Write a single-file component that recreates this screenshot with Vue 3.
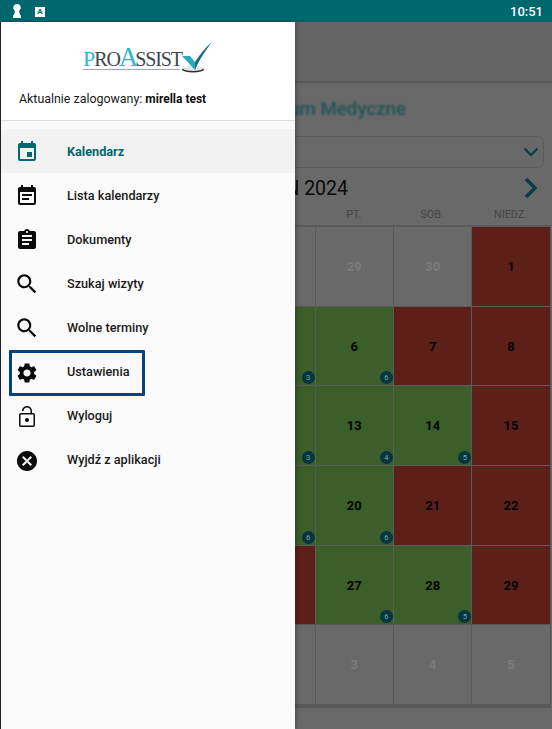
<script setup>
const icons = {
  event: 'M17 12h-5v5h5v-5zM16 1v2H8V1H6v2H5c-1.11 0-1.99.9-1.99 2L3 19c0 1.1.89 2 2 2h14c1.1 0 2-.9 2-2V5c0-1.1-.9-2-2-2h-1V1h-2zm3 18H5V8h14v11z',
  note: 'M21 5c0-1.1-.9-2-2-2h-1V1h-2v2H8V1H6v2H5c-1.11 0-1.99.9-1.99 2L3 19c0 1.1.89 2 2 2h14c1.1 0 2-.9 2-2V5zm-2 14H5V8h14v11zM7 10h10v2H7zm0 4h7v2H7z',
  doc: 'M19 3h-4.18C14.4 1.84 13.3 1 12 1c-1.3 0-2.4.84-2.82 2H5c-1.1 0-2 .9-2 2v14c0 1.1.9 2 2 2h14c1.1 0 2-.9 2-2V5c0-1.1-.9-2-2-2zm-7 0c.55 0 1 .45 1 1s-.45 1-1 1-1-.45-1-1 .45-1 1-1zm2 14H7v-2h7v2zm3-4H7v-2h10v2zm0-4H7V7h10v2z',
  search: 'M15.5 14h-.79l-.28-.27C15.41 12.59 16 11.11 16 9.5 16 5.91 13.09 3 9.5 3S3 5.91 3 9.5 5.91 16 9.5 16c1.61 0 3.09-.59 4.23-1.57l.27.28v.79l5 4.99L20.49 19l-4.99-5zm-6 0C7.01 14 5 11.99 5 9.5S7.01 5 9.5 5 14 7.01 14 9.5 11.99 14 9.5 14z',
  gear: 'M19.14 12.94c.04-.3.06-.61.06-.94 0-.32-.02-.64-.07-.94l2.03-1.58c.18-.14.23-.41.12-.61l-1.92-3.32c-.12-.22-.37-.29-.59-.22l-2.39.96c-.5-.38-1.03-.7-1.62-.94l-.36-2.54c-.04-.24-.24-.41-.48-.41h-3.84c-.24 0-.43.17-.47.41l-.36 2.54c-.59.24-1.13.57-1.62.94l-2.39-.96c-.22-.08-.47 0-.59.22L2.74 8.87c-.12.21-.08.47.12.61l2.03 1.58c-.05.3-.09.63-.09.94s.02.64.07.94l-2.03 1.58c-.18.14-.23.41-.12.61l1.92 3.32c.12.22.37.29.59.22l2.39-.96c.5.38 1.03.7 1.62.94l.36 2.54c.05.24.24.41.48.41h3.84c.24 0 .44-.17.47-.41l.36-2.54c.59-.24 1.13-.56 1.62-.94l2.39.96c.22.08.47 0 .59-.22l1.92-3.32c.12-.22.07-.47-.12-.61l-2.01-1.58zM12 15.6c-1.98 0-3.6-1.62-3.6-3.6s1.62-3.6 3.6-3.6 3.6 1.62 3.6 3.6-1.62 3.6-3.6 3.6z',
  lock: 'M12 17c1.1 0 2-.9 2-2s-.9-2-2-2-2 .9-2 2 .9 2 2 2zm6-9h-1V6c0-2.76-2.24-5-5-5S7 3.24 7 6h1.5c0-1.93 1.57-3.5 3.5-3.5s3.5 1.57 3.5 3.5v2H6c-1.1 0-2 .9-2 2v10c0 1.1.9 2 2 2h12c1.1 0 2-.9 2-2V10c0-1.1-.9-2-2-2zm.5 12c0 .28-.22.5-.5.5H6c-.28 0-.5-.22-.5-.5V10c0-.28.22-.5.5-.5h12c.28 0 .5.22.5.5v10z',
  cancel: 'M12 2C6.47 2 2 6.47 2 12s4.47 10 10 10 10-4.47 10-10S17.53 2 12 2zm5 13.59L15.59 17 12 13.41 8.41 17 7 15.59 10.59 12 7 8.41 8.41 7 12 10.59 15.59 7 17 8.41 13.41 12 17 15.59z'
}
const menu = [
  { label: 'Kalendarz', icon: 'event', active: true },
  { label: 'Lista kalendarzy', icon: 'note' },
  { label: 'Dokumenty', icon: 'doc' },
  { label: 'Szukaj wizyty', icon: 'search' },
  { label: 'Wolne terminy', icon: 'search' },
  { label: 'Ustawienia', icon: 'gear', focus: true },
  { label: 'Wyloguj', icon: 'lock' },
  { label: 'Wyjdź z aplikacji', icon: 'cancel' }
]
const weekdays = ['PON.', 'WT.', 'ŚR.', 'CZW.', 'PT.', 'SOB.', 'NIEDZ.']
const g = (n, b) => ({ n, t: 'green', b })
const r = n => ({ n, t: 'red' })
const o = n => ({ n, t: 'off' })
const cells = [
  o(25), o(26), o(27), o(28), o(29), o(30), r(1),
  g(2, 3), g(3, 3), g(4, 3), g(5, 3), g(6, 6), r(7), r(8),
  g(9, 3), g(10, 3), g(11, 3), g(12, 3), g(13, 4), g(14, 5), r(15),
  g(16, 6), g(17, 6), g(18, 6), g(19, 6), g(20, 6), r(21), r(22),
  r(23), r(24), r(25), r(26), g(27, 6), g(28, 5), r(29),
  o(30), o(31), o(1), o(2), o(3), o(4), o(5)
]
</script>

<template>
  <div class="screen">
    <div class="status">
      <div class="status-left">
        <svg class="key" viewBox="0 0 10 14" width="10" height="14"><path d="M5 0c2.1 0 3.8 1.6 3.8 3.6 0 1.3-.7 2.4-1.7 3.1.1 2 .7 3.6 1.9 5.1V14H1v-2.2c1.2-1.5 1.8-3.1 1.9-5.1C1.900 6 1.200 4.900 1.200 3.600 1.200 1.600 2.900 0 5 0z" fill="#fff"/></svg>
        <span class="a-box">A</span>
      </div>
      <span class="clock">10:51</span>
    </div>

    <div class="page">
      <div class="appbar"></div>
      <div class="title">Centrum Medyczne</div>
      <div class="select">
        <svg viewBox="0 0 16 10" width="16" height="10"><path d="M1.500 1.500 8 8l6.500-6.500" fill="none" stroke="#063e42" stroke-width="2.200"/></svg>
      </div>
      <div class="month">
        <span class="month-name">GRUDZIEŃ 2024</span>
        <svg viewBox="0 0 14 22" width="14" height="22"><path d="M2 2l9 9-9 9" fill="none" stroke="#063e42" stroke-width="3.400"/></svg>
      </div>
      <div class="weekdays">
        <span v-for="d in weekdays" :key="d">{{ d }}</span>
      </div>
      <div class="grid">
        <div v-for="(c, i) in cells" :key="i" class="cell" :class="c.t">
          <span>{{ c.n }}</span>
          <i v-if="c.b" class="badge">{{ c.b }}</i>
        </div>
      </div>
    </div>

    <aside class="drawer">
      <header class="drawer-head">
        <div class="logo">
          <div class="logo-text"><b>P</b>RO<b class="big">A</b>SSIST</div>
          <svg class="check" viewBox="0 0 32 34" width="32" height="34">
            <ellipse cx="12" cy="29.500" rx="11" ry="3" fill="#2b2b2b"/>
            <ellipse cx="12" cy="28.500" rx="10" ry="2.500" fill="#e6e6e6"/>
            <path d="M1 16l8 0 5 6 0 8z" fill="#2aa9c2"/>
            <path d="M14 22C19 14 25 7 31 2 25 10 18 20 14 30z" fill="#146b82"/>
          </svg>
        </div>
        <p class="user">Aktualnie zalogowany: <strong>mirella test</strong></p>
      </header>
      <nav class="menu">
        <a v-for="m in menu" :key="m.label" class="item" :class="{ active: m.active }">
          <svg class="ico" :class="{ wide: m.icon === 'search' }" viewBox="0 0 24 24" width="24" height="24"><path :d="icons[m.icon]"/></svg>
          <span class="label">{{ m.label }}</span>
          <i v-if="m.focus" class="focus"></i>
        </a>
      </nav>
    </aside>
  </div>
</template>

<style scoped>
.screen {
  position: relative;
  width: 552px;
  height: 729px;
  overflow: hidden;
  background: #696969;
  font-family: Roboto, "Liberation Sans", sans-serif;
}
.status {
  height: 22px;
  background: #00666e;
  display: flex;
  align-items: center;
  justify-content: space-between;
  padding: 0 9px 0 12px;
}
.status-left { display: flex; align-items: center; gap: 13px; }
.key { display: block; }
.a-box {
  width: 10px;
  height: 10px;
  margin-top: 1px;
  background: #fff;
  color: #00666e;
  font-size: 8px;
  font-weight: 700;
  line-height: 10px;
  text-align: center;
}
.clock { color: #fff; font-size: 13px; font-weight: 500; }

.appbar {
  height: 59px;
  background: #656565;
  border-bottom: 1px solid #555;
  box-shadow: 0 1px 2px rgba(0,0,0,.2);
}
.title {
  margin-top: 15px;
  height: 24px;
  padding-right: 146px;
  text-align: right;
  font-size: 18.700px;
  line-height: 24px;
  font-weight: 500;
  color: #1f5357;
  filter: blur(.8px);
}
.select {
  margin: 15px 8px 0 100px;
  height: 32px;
  box-sizing: border-box;
  border: 1px solid #5c5c5c;
  border-radius: 7px;
  display: flex;
  align-items: center;
  justify-content: flex-end;
  padding-right: 4px;
}
.month {
  height: 26px;
  margin-top: 7px;
  padding-right: 14px;
  display: flex;
  align-items: center;
  justify-content: flex-end;
  gap: 176px;
}
.month-name { font-size: 19.500px; color: #0a0a0a; white-space: nowrap; }
.weekdays {
  display: grid;
  grid-template-columns: repeat(7, 78.4px);
  margin: 5px 0 0 1px;
  height: 17px;
  text-align: center;
  font-size: 10.800px;
  line-height: 18px;
  color: #444;
}
.grid {
  display: grid;
  grid-template-columns: repeat(7, 78.4px);
  grid-auto-rows: 79.7px;
  margin: 2px 0 0 2px;
  border-top: 2px solid #5a5a5a;
  border-bottom: 3px solid #595959;
  width: 549px;
}
.cell {
  position: relative;
  display: flex;
  align-items: center;
  justify-content: center;
  box-sizing: border-box;
  border-right: 1px solid #5a5a5a;
  border-bottom: 1px solid #5a5a5a;
  font-size: 13px;
  font-weight: 700;
  color: #050505;
}
.cell.off { color: #7b7b7b; }
.cell.green { background: #3b5e2a; }
.cell.red { background: #5c2019; }
.badge {
  position: absolute;
  right: 0;
  bottom: 1px;
  width: 13px;
  height: 13px;
  border-radius: 50%;
  background: #023640;
  color: #8fa3a6;
  font-size: 7.500px;
  font-style: normal;
  font-weight: 400;
  line-height: 13px;
  text-align: center;
}

.drawer {
  position: absolute;
  left: 0;
  top: 22px;
  bottom: 0;
  width: 295px;
  box-sizing: border-box;
  border-left: 1px solid #222;
  background: #fafafa;
  box-shadow: 2px 0 4px rgba(0,0,0,.25);
}
.drawer-head {
  height: 99px;
  box-sizing: border-box;
  background: #fff;
  border-bottom: 1px solid #dcdcdc;
  padding-top: 18px;
}
.logo { position: relative; width: 130px; height: 34px; margin-left: 82px; }
.logo-text {
  position: absolute;
  left: 0;
  top: 7px;
  width: 97px;
  height: 22px;
  border-bottom: 1px solid #a5a5a5;
  font-family: "Liberation Serif", serif;
  font-size: 20px;
  line-height: 22px;
  letter-spacing: -1.100px;
  color: #3a4650;
  white-space: nowrap;
}
.logo-text b { font-weight: 400; font-size: 22px; color: #30b8c9; }
.logo-text .big { font-size: 27px; line-height: 20px; margin: 0 -2px 0 -1px; }
.check { position: absolute; left: 98px; top: 0; }
.user { margin: 17px 0 0 18px; font-size: 12.400px; line-height: 16px; color: #1a1a1a; }
.user strong { font-size: 12px; font-weight: 700; color: #111; }

.menu { padding-top: 9px; }
.item {
  position: relative;
  height: 44.1px;
  display: flex;
  align-items: center;
  padding-left: 14px;
  font-size: 12.700px;
  font-weight: 500;
  color: #1a1a1a;
  border-radius: 4px 0 0 4px;
}
.label { margin-bottom: 2px; }
.item .ico { fill: #0a0a0a; margin-right: 28px; flex: none; }
.item .ico.wide { transform: scale(1.08); }
.item.active {
  background: linear-gradient(#f2f2f2 43px, transparent 43px);
  box-shadow: 0 -1px 0 #f2f2f2;
  color: #04666e;
  font-weight: 700;
}
.item.active .ico { fill: #04666e; }
.focus {
  position: absolute;
  left: 8px;
  top: 0;
  width: 136px;
  height: 46px;
  box-sizing: border-box;
  border: 3px solid #024480;
  border-radius: 1px;
}
</style>
